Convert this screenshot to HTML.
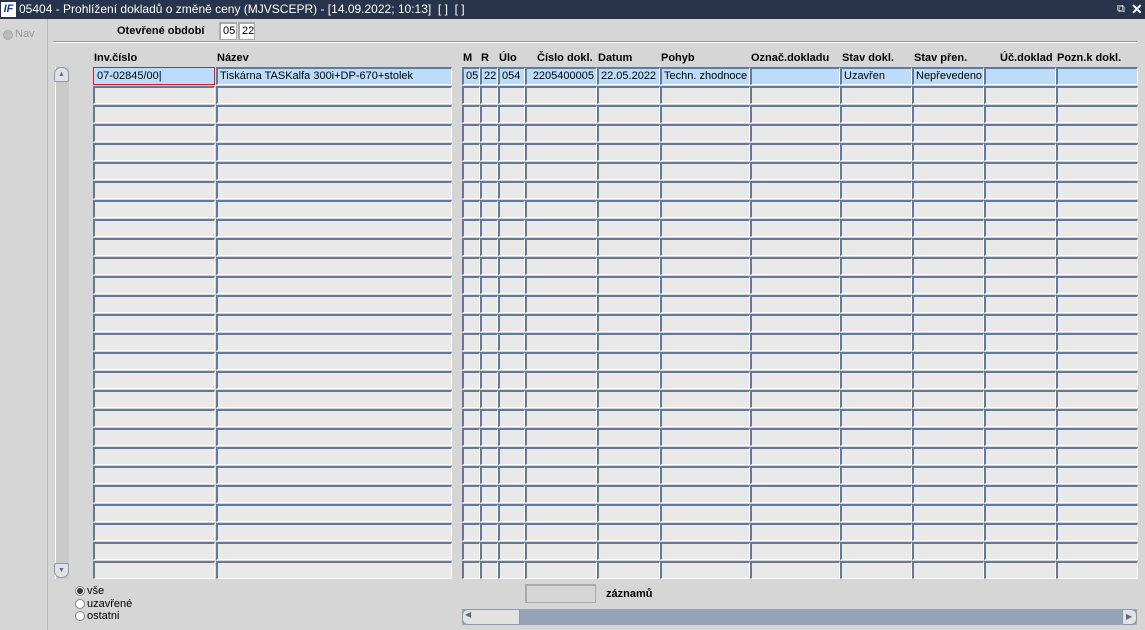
<!DOCTYPE html>
<html><head><meta charset="utf-8"><style>
*{margin:0;padding:0;box-sizing:border-box}
body{width:1145px;height:630px;background:#d6d6d6;font-family:"Liberation Sans",Arial,sans-serif;font-size:11px;position:relative;overflow:hidden;color:#000}
.a{position:absolute}
.title{left:0;top:0;width:1145px;height:19px;background:#27344b;color:#fff;font-size:12px;line-height:19px;padding-left:19px;white-space:nowrap}
.c{position:absolute;height:18px;background:#e9e9e9;border-left:2px solid #64789a;border-top:2px solid #64789a;border-right:1px solid #fff;border-bottom:1px solid #fff;line-height:15px;padding-left:2px;white-space:nowrap;overflow:hidden}
.c.s{background:#bcdcfa}
.h{position:absolute;top:52px;font-weight:bold;font-size:11px}
.rad{position:absolute;width:10px;height:10px;border-radius:50%;background:#fff;border:1px solid #888}
</style></head><body>
<div class="a title">05404 - Prohlížení dokladů o změně ceny (MJVSCEPR) - [14.09.2022; 10:13]&nbsp; [ ]&nbsp; [ ]</div>
<div class="a" style="left:1px;top:2px;width:15px;height:15px;background:#fff;color:#1a3aa0;font-weight:bold;font-style:italic;font-size:11px;line-height:15px;text-align:center">IF</div>
<div class="a" style="left:1117px;top:3px;color:#fff;font-size:11px">&#x29C9;</div>
<div class="a" style="left:1131px;top:1px;color:#fff;font-size:14px;font-weight:bold">✕</div>
<div class="a" style="left:47px;top:19px;width:1px;height:611px;background:#b8b8b8"></div>
<div class="rad" style="left:3px;top:30px;background:#bbb;border-color:#aaa"></div>
<div class="a" style="left:15px;top:28px;color:#999;font-size:11px">Nav</div>
<div class="a" style="left:117px;top:25px;font-weight:bold">Otevřené období</div>
<div class="c" style="left:219px;top:22px;width:18px;background:#fff;border-color:#aaa">05</div>
<div class="c" style="left:238px;top:22px;width:17px;background:#fff;border-color:#aaa">22</div>
<div class="a" style="left:53px;top:41px;width:1084px;height:2px;background:#9a9a9a;border-bottom:1px solid #fff"></div>
<div class="h" style="left:94px">Inv.číslo</div>
<div class="h" style="left:217px">Název</div>
<div class="h" style="left:463px">M</div>
<div class="h" style="left:481px">R</div>
<div class="h" style="left:499px">Úlo</div>
<div class="h" style="left:537px">Číslo dokl.</div>
<div class="h" style="left:598px">Datum</div>
<div class="h" style="left:661px">Pohyb</div>
<div class="h" style="left:751px">Označ.dokladu</div>
<div class="h" style="left:842px">Stav dokl.</div>
<div class="h" style="left:914px">Stav přen.</div>
<div class="h" style="left:1000px">Úč.doklad</div>
<div class="h" style="left:1057px">Pozn.k dokl.</div>
<div id="g"></div>
<div class="c s" style="left:93px;top:67px;width:122px;border:1px solid #d02020;padding-left:3px;line-height:17px">07-02845/00|</div>
<div class="c s" style="left:216px;top:67px;width:236px">Tiskárna TASKalfa 300i+DP-670+stolek</div>
<div class="c s" style="left:462px;top:67px;width:18px">05</div>
<div class="c s" style="left:480px;top:67px;width:18px">22</div>
<div class="c s" style="left:498px;top:67px;width:27px">054</div>
<div class="c s" style="left:525px;top:67px;width:72px;text-align:right;padding-right:2px">2205400005</div>
<div class="c s" style="left:597px;top:67px;width:63px">22.05.2022</div>
<div class="c s" style="left:660px;top:67px;width:90px">Techn. zhodnoce</div>
<div class="c s" style="left:750px;top:67px;width:90px"></div>
<div class="c s" style="left:840px;top:67px;width:72px">Uzavřen</div>
<div class="c s" style="left:912px;top:67px;width:72px">Nepřevedeno</div>
<div class="c s" style="left:984px;top:67px;width:72px"></div>
<div class="c s" style="left:1056px;top:67px;width:82px"></div>
<div class="a" style="left:55px;top:67px;width:14px;height:512px;background:#c9c9c9;border-left:1px solid #fff"></div>
<div class="a" style="left:54px;top:67px;width:15px;height:15px;background:#e2e2e2;border:1px solid #8a98ae;border-radius:7px 7px 2px 2px;font-size:7px;text-align:center;line-height:13px;color:#5a6a88">▲</div>
<div class="a" style="left:54px;top:563px;width:15px;height:15px;background:#e2e2e2;border:1px solid #8a98ae;border-radius:2px 2px 7px 7px;font-size:7px;text-align:center;line-height:13px;color:#5a6a88">▼</div>
<div class="rad" style="left:75px;top:586px;background:#333;border:2px solid #fff;outline:1px solid #888;outline-offset:-1px"></div>
<div class="a" style="left:87px;top:585px">vše</div>
<div class="rad" style="left:75px;top:599px"></div>
<div class="a" style="left:87px;top:598px">uzavřené</div>
<div class="rad" style="left:75px;top:611px"></div>
<div class="a" style="left:87px;top:610px">ostatni</div>
<div class="c" style="left:525px;top:584px;width:71px;height:19px;background:#d6d6d6;border-color:#aaa"></div>
<div class="a" style="left:606px;top:588px;font-weight:bold">záznamů</div>
<div class="a" style="left:462px;top:609px;width:675px;height:16px;background:#94a3b6"></div>
<div class="a" style="left:462px;top:609px;width:58px;height:16px;background:#e2e2e2;border:1px solid #8a98ae;border-radius:6px 0 0 6px"></div>
<div class="a" style="left:465px;top:610px;font-size:8px;color:#5a6a88">◀</div>
<div class="a" style="left:1122px;top:609px;width:15px;height:16px;background:#e2e2e2;border:1px solid #8a98ae;border-radius:0 6px 6px 0;font-size:8px;color:#5a6a88;padding:2px 0 0 3px">▶</div>
<script>
var cols=[[93,122],[216,236],[462,18],[480,18],[498,27],[525,72],[597,63],[660,90],[750,90],[840,72],[912,72],[984,72],[1056,82]];
var h='';for(var r=1;r<27;r++){var y=67+r*19;for(var i=0;i<cols.length;i++){h+='<div class="c" style="left:'+cols[i][0]+'px;top:'+y+'px;width:'+cols[i][1]+'px"></div>';}}
document.getElementById('g').innerHTML=h;
</script>
</body></html>
